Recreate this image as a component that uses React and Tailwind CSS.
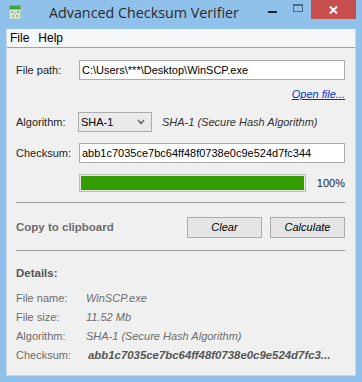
import React from 'react'

const ui = { fontFamily: '"Liberation Sans", Arial, sans-serif' }
const title = { fontFamily: '"Open Sans", "Noto Sans", sans-serif' }

const AppIcon = () => (
    <svg width="12" height="14" viewBox="0 0 12 14">
        <rect x="0.5" y="1" width="11" height="13" fill="#d8e8d8" stroke="#b0c8b0" />
        <rect x="0.5" y="0.5" width="11" height="4" fill="#3fa63f" />
        <rect x="2" y="6" width="2" height="2" fill="#8cc08c" />
        <rect x="5" y="7" width="2" height="2" fill="#a8d0a8" />
        <rect x="8" y="6" width="2" height="2" fill="#7ab87a" />
        <rect x="3" y="10" width="2" height="2" fill="#9ac89a" />
        <rect x="7" y="10" width="2" height="2" fill="#8cc08c" />
    </svg>
)

const DetailRow = ({label, value, bold}) => (
    <div className="flex items-center h-[19px]">
        <span className="w-[70px] text-[#6d6d6d] text-[11px]">{label}</span>
        <span className={`italic whitespace-nowrap ${bold ? 'font-bold text-[#555] text-[11.4px] ml-[2px]' : 'text-[#6d6d6d] text-[11px]'}`}>{value}</span>
    </div>
)

export default function App() {
    return (
        <div className="w-[362px] h-[382px] bg-[#90c1ea] flex flex-col overflow-hidden" style={ui}>
            {/* title bar */}
            <div className="h-[29px] flex items-start shrink-0">
                <div className="pl-[9px] pt-[5px]"><AppIcon /></div>
                <div className="ml-[28px] mt-[3px] text-[14.3px] text-[#2b2b2b] leading-[20px]" style={title}>Advanced Checksum Verifier</div>
                <div className="flex-1" />
                <div className="w-[26px] h-[20px] flex items-center justify-center">
                    <div className="w-[9px] h-[2px] bg-[#222] mt-[4px]" />
                </div>
                <div className="w-[26px] h-[20px] flex items-center justify-center">
                    <div className="w-[10px] h-[8px] border border-[#4a6a8a] border-t-2 mb-[5px]" />
                </div>
                <div className="w-[45px] h-[19px] bg-[#c7504f] flex items-center justify-center mr-[6px]">
                    <svg width="9" height="8" viewBox="0 0 9 8"><path d="M1 0.5 L8 7.5 M8 0.5 L1 7.5" stroke="#fff" strokeWidth="2" /></svg>
                </div>
            </div>

            {/* client */}
            <div className="mx-[6px] h-[347px] bg-[#f0f0f0] flex flex-col border border-[#c8d8e8] border-t-0">
                <div className="h-[19px] bg-[#f5f6f7] border-b border-[#a0a0a0] flex items-center text-[12px] text-black px-[3px] gap-[9px] shrink-0">
                    <span>File</span>
                    <span>Help</span>
                </div>

                <div className="pl-[9px] pr-[10px] text-[11px] text-[#1e1e1e]">
                    <div className="flex items-center mt-[12px] h-[20px]">
                        <span className="w-[63px]">File path:</span>
                        <div className="flex-1 h-[20px] bg-white border border-[#ababab] flex items-center pl-[2px] text-black">C:\Users\***\Desktop\WinSCP.exe</div>
                    </div>
                    <div className="flex justify-end mt-[6px] h-[16px] items-center">
                        <span className="italic underline text-[#0033cc]">Open file...</span>
                    </div>
                    <div className="flex items-center mt-[10px] h-[20px]">
                        <span className="w-[62px]">Algorithm:</span>
                        <div className="w-[74px] h-[20px] bg-[#eaeaea] border border-[#acacac] flex items-center pl-[2px] justify-between pr-[6px] text-black">
                            <span>SHA-1</span>
                            <svg width="8" height="6" viewBox="0 0 8 6"><path d="M1 1 L4 4.5 L7 1" stroke="#666" strokeWidth="1.6" fill="none" /></svg>
                        </div>
                        <span className="ml-[10px] italic text-[#333]">SHA-1 (Secure Hash Algorithm)</span>
                    </div>
                    <div className="flex items-center mt-[11px] h-[20px]">
                        <span className="w-[63px]">Checksum:</span>
                        <div className="flex-1 h-[20px] bg-white border border-[#ababab] flex items-center pl-[2px] text-black">abb1c7035ce7bc64ff48f0738e0c9e524d7fc344</div>
                    </div>
                    <div className="flex items-center mt-[11px] h-[18px]">
                        <div className="ml-[63px] w-[228px] h-[18px] border border-[#bcbcbc] bg-[#e6e6e6] p-[1px]">
                            <div className="h-full bg-[#349e00]" style={{width: '100%'}} />
                        </div>
                        <span className="ml-[11px]">100%</span>
                    </div>
                    <div className="mt-[10px] border-t border-[#a0a0a0]" />
                    <div className="flex items-center mt-[14px] h-[21px]">
                        <span className="font-bold text-[#6d6d6d] text-[11.5px]">Copy to clipboard</span>
                        <div className="flex-1" />
                        <div className="w-[75px] h-[21px] bg-[#e5e5e5] border border-[#acacac] flex items-center justify-center italic text-black">Clear</div>
                        <div className="w-[75px] h-[21px] ml-[8px] bg-[#e5e5e5] border border-[#acacac] flex items-center justify-center italic text-black">Calculate</div>
                    </div>
                    <div className="mt-[12px] border-t border-[#a0a0a0]" />
                    <div className="mt-[15px] h-[16px] flex items-center font-bold text-[11.5px] text-[#555]">Details:</div>
                    <div className="mt-[7px] flex flex-col">
                        <DetailRow label="File name:" value="WinSCP.exe" />
                        <DetailRow label="File size:" value="11.52 Mb" />
                        <DetailRow label="Algorithm:" value="SHA-1 (Secure Hash Algorithm)" />
                        <DetailRow label="Checksum:" value="abb1c7035ce7bc64ff48f0738e0c9e524d7fc3..." bold />
                    </div>
                </div>
            </div>
        </div>
    )
}
